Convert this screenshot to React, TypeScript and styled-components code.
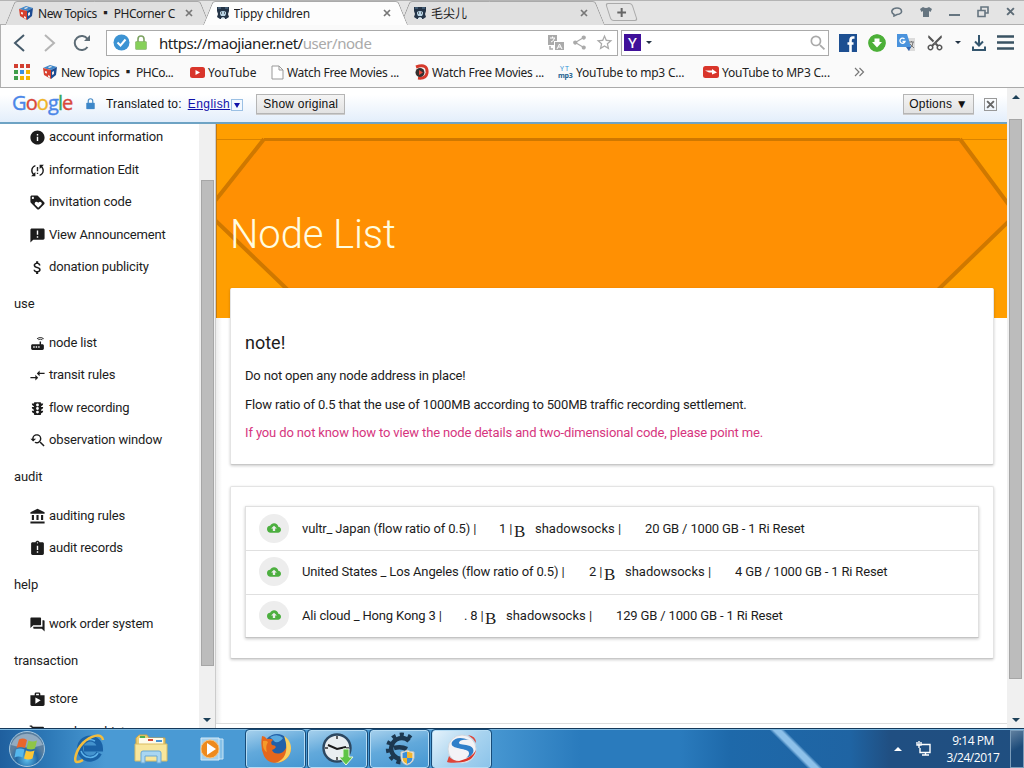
import React from 'react';
import styled, { createGlobalStyle, css } from 'styled-components';
import {
  MdInfo, MdSyncProblem, MdLoyalty, MdAnnouncement, MdAttachMoney, MdRouter, MdCompareArrows,
  MdTraffic, MdYoutubeSearchedFor, MdAccountBalance, MdAssignmentLate, MdQuestionAnswer, MdShop,
  MdShoppingCart, MdBackup, MdShare, MdStarBorder, MdSearch, MdContentCut,
} from 'react-icons/md';

const GlobalStyle = createGlobalStyle`
  * { box-sizing: border-box; }
  body { margin: 0; overflow: hidden; background: #fff; }
`;

const uiFont = '"Noto Sans", "Noto Sans CJK SC", sans-serif';

const Screen = styled.div`
  width: 1024px;
  height: 768px;
  display: flex;
  flex-direction: column;
  overflow: hidden;
  font-family: Roboto, sans-serif;
  color: #1c1c1c;
`;

/* ---------- browser chrome ---------- */

const TabStrip = styled.div`
  flex: none;
  height: 25px;
  display: flex;
  padding-left: 5px;
  background: #e4e4e4;
  border-top: 1px solid #b4b4b4;
  border-bottom: 1px solid #b0b0b0;
  font-family: ${uiFont};
`;

const Tab = styled.div<{ $active?: boolean }>`
  position: relative;
  z-index: ${p => (p.$active ? 2 : 1)};
  width: 205px;
  height: 24px;
  margin-right: -7.5px;
  padding: 0 17px 0 13px;
  display: flex;
  align-items: center;
  font-size: 12px;
  white-space: nowrap;
  color: #222;
  &::before, &::after {
    content: '';
    position: absolute;
    z-index: -1;
    top: 0;
    bottom: 0;
    width: 51%;
    background: ${p => (p.$active ? '#fdfdfd' : '#e0e0e0')};
    border-top: 1px solid #aaa;
  }
  &::before {
    left: 0;
    border-left: 1px solid #999;
    border-top-left-radius: 3px;
    transform: skewX(-22deg);
    transform-origin: bottom;
  }
  &::after {
    right: 0;
    border-right: 1px solid #999;
    border-top-right-radius: 3px;
    transform: skewX(22deg);
    transform-origin: bottom;
  }
`;

const TabTitle = styled.span<{ $ls?: number }>`
  flex: 1;
  overflow: hidden;
  margin-left: 4px;
  letter-spacing: ${p => p.$ls ?? 0}px;
`;

const NewTab = styled.div`
  width: 27px;
  height: 18px;
  margin: 2px 0 0 10px;
  display: grid;
  place-items: center;
  border: 1px solid #aaa;
  border-radius: 3px;
  background: #e4e4e4;
  transform: skewX(18deg);
  svg { transform: skewX(-18deg); }
`;

const WindowButtons = styled.div`
  margin-left: auto;
  padding-right: 9px;
  display: flex;
  align-items: center;
  gap: 17px;
  height: 21px;
`;

const NavBar = styled.div`
  flex: none;
  height: 35px;
  display: flex;
  align-items: center;
  padding: 0 10px 0 12px;
  background: #fafafa;
  border-left: 1px solid #b0b0b0;
  font-family: ${uiFont};
`;

const NavButtons = styled.div`
  display: flex;
  gap: 17px;
  width: 93px;
  align-items: center;
`;

const Field = styled.div<{ $w: number }>`
  width: ${p => p.$w}px;
  height: 26px;
  display: flex;
  align-items: center;
  background: #fff;
  border: 1px solid #aaa;
`;

const AddressField = styled(Field)`
  padding: 0 3px 0 6px;
  gap: 5px;
  margin-right: 3px;
`;

const SearchField = styled(Field)`
  padding: 0 0 0 2px;
  gap: 5px;
  margin-right: 10px;
  svg { margin-left: auto; }
`;

const FieldActions = styled.span`
  display: flex;
  align-items: center;
  gap: 7px;
  color: #aaa;
`;

const Url = styled.span`
  flex: 1;
  margin-left: 7px;
  font-size: 15px;
  letter-spacing: -0.45px;
  color: #222;
  white-space: nowrap;
  span { color: #aaa; }
`;

const Caret = styled.i`
  border: 3px solid transparent;
  border-top-color: #234;
  border-bottom: 0;
`;

const YahooBadge = styled.b`
  width: 17px;
  height: 17px;
  background: #40109a;
  color: #fff;
  font: 500 15px/17px "Noto Sans", sans-serif;
  text-align: center;
`;

const Extensions = styled.div`
  display: flex;
  flex: 1;
  align-items: center;
  justify-content: space-between;
`;

const Scissors = styled(MdContentCut)`
  transform: rotate(-90deg);
`;

const Bookmarks = styled.div`
  flex: none;
  height: 28px;
  display: flex;
  padding: 0 0 3px 13px;
  align-items: center;
  background: #fafafa;
  border-left: 1px solid #b0b0b0;
  border-bottom: 1px solid #aaa;
  font-family: ${uiFont};
  font-size: 12px;
  color: #222;
`;

const Bookmark = styled.div<{ $w: number; $ls?: number }>`
  width: ${p => p.$w}px;
  display: flex;
  align-items: center;
  gap: 3px;
  white-space: nowrap;
  letter-spacing: ${p => p.$ls ?? 0}px;
`;

const Mp3Mark = styled.span`
  width: 15px;
  display: flex;
  flex-direction: column;
  font: 700 7px/7px "Noto Sans", sans-serif;
  letter-spacing: -0.3px;
  color: #24638f;
  span { font-weight: 400; padding-left: 2px; letter-spacing: 1px; color: #3192d6; }
`;

/* ---------- page area ---------- */

const Viewport = styled.div`
  flex: none;
  height: 640px;
  display: flex;
  background: #fff;
`;

const PageColumn = styled.div`
  width: 1007px;
  display: flex;
  flex-direction: column;
`;

const TranslateBar = styled.div`
  flex: none;
  height: 36px;
  display: flex;
  align-items: center;
  padding: 0 10px 2px 12px;
  background: linear-gradient(#fff 20%, #e3eefb);
  border-bottom: 2px solid #6ea3c4;
  font: 12px "Liberation Sans", Arial, sans-serif;
  color: #111;
  white-space: nowrap;
`;

const GoogleWord = styled.span`
  width: 74px;
  font: 500 20px/20px "Open Sans", sans-serif;
  letter-spacing: -0.9px;
  margin-top: -3px;
  -webkit-text-stroke: 0.4px;
`;

const Letter = styled.span<{ $c: string }>`
  color: ${p => p.$c};
`;

const Translated = styled.span`
  margin: 0 6px 0 11px;
  letter-spacing: 0.2px;
`;

const Language = styled.span`
  color: #11a;
  letter-spacing: 0.45px;
  text-decoration: underline;
`;

const LanguageArrow = styled.span`
  width: 12px;
  height: 12px;
  margin: 2px 13px 0 1px;
  display: grid;
  place-items: center;
  border: 1px solid #9bc0e4;
  background: #f2f8ff;
  i { border: 3px solid transparent; border-top: 5px solid #11a; border-bottom: 0; }
`;

const GreyButton = styled.span<{ $w: number; $end?: boolean }>`
  width: ${p => p.$w}px;
  height: 20px;
  margin-left: ${p => (p.$end ? 'auto' : '0')};
  border: 1px solid #b5b5b5;
  background: linear-gradient(#f4f4f4, #e2e2e2);
  box-shadow: 0 1px 0 #ccc;
  line-height: 18px;
  text-align: center;
  letter-spacing: 0.22px;
`;

const CloseBox = styled.span`
  width: 13px;
  height: 13px;
  margin: 0 0 0 10px;
  border: 1px solid #999;
  display: grid;
  place-items: center;
`;

const Columns = styled.div`
  flex: 1;
  min-height: 0;
  display: flex;
`;

const Sidebar = styled.nav`
  width: 199px;
  overflow: hidden;
`;

const Heading = styled.div`
  height: 43px;
  padding: 0 0 9px 14px;
  display: flex;
  align-items: center;
  font-size: 13px;
  letter-spacing: -0.1px;
`;

const NavItem = styled.div`
  height: 32.5px;
  padding: 0 0 7px 29px;
  display: flex;
  align-items: center;
  gap: 3px;
  font-size: 13px;
  letter-spacing: -0.16px;
  white-space: nowrap;
  svg { width: 17px; height: 17px; margin-top: 2px; flex: none; }
`;

const scrollBase = css`
  display: flex;
  flex-direction: column;
  align-items: center;
  background: #f0f0f0;
`;

const SideScroll = styled.div`
  ${scrollBase}
  width: 17px;
  padding: 56px 0 6px;
  border-right: 1px solid #ccc;
`;

const PageScroll = styled.div`
  ${scrollBase}
  width: 17px;
  padding: 7px 0 6px;
`;

const Thumb = styled.div<{ $h: number; $mt?: number }>`
  width: 13px;
  height: ${p => p.$h}px;
  margin-top: ${p => p.$mt ?? 0}px;
  background: #bcbcbc;
  border: 1px solid #a6a6a6;
`;

const Arrow = styled.i<{ $down?: boolean }>`
  border: 4px solid transparent;
  ${p => (p.$down
    ? 'border-top-color: #1d4058; border-bottom: 0; margin-top: auto;'
    : 'border-bottom-color: #1d4058; border-top: 0;')}
`;

const Main = styled.main`
  flex: 1;
  min-width: 0;
  display: flex;
  flex-direction: column;
  border-bottom: 1px solid #ddd;
  margin-bottom: 4px;
  background: linear-gradient(90deg, #ececec, #fff 6px);
`;

const Hero = styled.header`
  flex: none;
  height: 194px;
  position: relative;
  background: #ff9e00;
  border-left: 1px solid #c47a10;
`;

const HeroArt = styled.svg`
  position: absolute;
  inset: 0;
  width: 790px;
  height: 194px;
`;

const Title = styled.h1`
  position: relative;
  margin: 0;
  padding: 87px 0 0 13px;
  font: 300 40px/47px Roboto, sans-serif;
  letter-spacing: -0.1px;
  color: #fffde0;
`;

const Card = styled.section<{ $h: number }>`
  position: relative;
  flex: none;
  height: ${p => p.$h}px;
  margin: 0 13px 21px 14px;
  background: #fff;
  border-radius: 2px;
  border: 1px solid #e4e4e4;
  border-bottom-color: #c8c8c8;
  box-shadow: 0 1px 3px rgba(0, 0, 0, 0.2);
`;

const NoteCard = styled(Card)`
  margin-top: -30px;
  border-top-color: #fff;
  padding: 42px 14px 0;
`;

const NoteTitle = styled.h2`
  margin: 0 0 11px;
  font: 400 18px/24px Roboto, sans-serif;
`;

const Note = styled.p<{ $accent?: boolean }>`
  margin: 0 0 8.5px;
  font-size: 13px;
  line-height: 20px;
  letter-spacing: ${p => (p.$accent ? -0.13 : -0.16)}px;
  color: ${p => (p.$accent ? '#d6357e' : '#1c1c1c')};
`;

const ListCard = styled(Card)`
  padding: 19px 14px;
`;

const NodeTable = styled.div`
  border: 1px solid #e0e0e0;
  border-bottom-color: #c4c4c4;
  box-shadow: 0 1px 3px rgba(0, 0, 0, 0.22);
`;

const NodeRow = styled.div`
  height: 43.3px;
  display: flex;
  align-items: center;
  padding: 0 0 1px 13px;
  font-size: 13px;
  letter-spacing: -0.15px;
  white-space: nowrap;
  & + & { border-top: 1px solid #e0e0e0; }
`;

const Avatar = styled.span`
  width: 30px;
  height: 29px;
  border-radius: 50%;
  margin-right: 13px;
  display: grid;
  place-items: center;
  background: #ededed;
  color: #4caf3f;
`;

const Cell = styled.span<{ $w: number }>`
  width: ${p => p.$w}px;
`;

const Service = styled(Cell)`
  letter-spacing: 0;
`;

const Bitcoin = styled.span`
  width: 21px;
  font: 17px/17px "Liberation Serif", serif;
  padding-top: 6px;
`;

/* ---------- taskbar ---------- */

const Taskbar = styled.footer`
  flex: none;
  height: 40px;
  display: flex;
  align-items: center;
  background:
    linear-gradient(45deg, transparent 48.2%, #8dc1ea 49.2%, #8dc1ea 50.8%, transparent 51.8%) 596px 0 / 400px 40px no-repeat,
    linear-gradient(90deg, #1f5f9e 0, #2e7ab8 50px, #4a9ad4 105px, #4a9ad4 480px, #2a7bbd 580px, #2a7bbd 680px, #1e69aa 730px, #1f64a3 850px, #204f82 890px, #204f80);
  border-top: 1px solid #15395a;
  box-shadow: inset 0 1px 0 #7db8e0;
  color: #fff;
`;

const Launcher = styled.div<{ $w: number }>`
  width: ${p => p.$w}px;
  display: grid;
  place-items: center;
`;

const TaskButton = styled.div<{ $active?: boolean }>`
  width: 59px;
  height: 38px;
  margin-right: 3px;
  display: grid;
  place-items: center;
  border: 1px solid #b5dcf4;
  outline: 1px solid #174b78;
  border-radius: 3px;
  background: ${p => (p.$active
    ? 'linear-gradient(135deg, #e4f2fb, #a8d3ef 55%, #8cc4ea)'
    : 'linear-gradient(165deg, #a4cfec, #62a9db 45%, #4597d2)')};
`;

const Tray = styled.div`
  margin-left: auto;
  display: flex;
  align-items: center;
  height: 100%;
`;

const TrayUp = styled.i`
  border: 4px solid transparent;
  border-bottom-color: #fff;
  border-top: 0;
  margin-right: 14px;
`;

const Clock = styled.div`
  width: 62px;
  margin: 0 6px 0 11px;
  font: 12px/17px "Open Sans", sans-serif;
  letter-spacing: -0.45px;
  text-align: center;
`;

const ShowDesktop = styled.div`
  width: 14px;
  height: 38px;
  border: 1px solid #7a9cba;
  background: linear-gradient(150deg, #60809f, #1d4b7a 50%);
`;

/* ---------- drawings ---------- */

const Cross = ({ s = 8, c = '#777' }: { s?: number; c?: string }) => (
  <svg width={s} height={s} viewBox="0 0 8 8"><path d="M1 1l6 6M7 1l-6 6" stroke={c} strokeWidth="1.7" /></svg>
);

const CubeIcon = () => (
  <svg width="16" height="16" viewBox="0 0 16 16">
    <path d="M1 4l7-3 7 2-6 3z" fill="#3e86c9" />
    <path d="M1 4l8 2v9l-7-4z" fill="#d8402f" />
    <path d="M9 6l6-3-1 8-5 4z" fill="#1d4c93" />
    <path d="M3 7l2 .5v2L3 9zM10 8l2-1v3l-2 1zM6 3l3-1 1 1-3 1zM6 11l2 1v2l-2-1z" fill="#f4e9e6" />
  </svg>
);

const FaceIcon = () => (
  <svg width="14" height="14" viewBox="0 0 14 14">
    <path d="M1 1h12v4l-1 3 1 3-3 2H4l-3-2 1-3-1-3z" fill="#243447" />
    <path d="M4 6q3-2 6 0v2L9 10H5L4 8z" fill="#b9d3e4" />
    <path d="M5 6.500h1v1H5zM8 6.500h1v1H8z" fill="#111" />
    <path d="M5 12l2-1 2 1v1H5z" fill="#dce8ef" />
    <path d="M2 2h3M9 2h3" stroke="#5c7f9c" />
  </svg>
);

const PageIcon = () => (
  <svg width="13" height="15" viewBox="0 0 13 15"><path d="M1 1h7l4 4v9H1zM8 1v4h4" fill="#fff" stroke="#999" /></svg>
);

const AppsIcon = () => (
  <svg width="17" height="17" viewBox="0 0 17 17">
    {['#d23f31', '#d23f31', '#d23f31', '#3f9e4a', '#3b8fe0', '#f4b400', '#3f9e4a', '#f4b400', '#f4b400'].map((c, i) => (
      <rect key={i} x={(i % 3) * 6} y={Math.floor(i / 3) * 6} width="4" height="4" fill={c} />
    ))}
  </svg>
);

const LockIcon = ({ w, c, s }: { w: number; c: string; s: string }) => (
  <svg width={w} height={w * 1.25} viewBox="0 0 12 15">
    <path d="M3 7V4a3 3 0 0 1 6 0v3" fill="none" stroke={s} strokeWidth="1.6" />
    <rect x="0.5" y="6.5" width="11" height="8" rx="0.8" fill={c} stroke={s} strokeWidth="0.5" />
  </svg>
);

const OrbIcon = () => (
  <svg width="38" height="38" viewBox="0 0 38 38">
    <defs><radialGradient id="orb" cx=".5" cy=".8"><stop offset="0" stopColor="#5fc0ee" /><stop offset=".6" stopColor="#2368a4" /><stop offset="1" stopColor="#5b7f9f" /></radialGradient></defs>
    <circle cx="19" cy="19" r="17.5" fill="url(#orb)" stroke="#a5c8e0" />
    <path d="M3 15a17 17 0 0 1 32 0q-16 5-32 0z" fill="#d4e2ec" opacity=".45" />
    <path d="M11 9.500q4-2 8 .5l-2 8q-4-2-8.500 0z" fill="#e8662c" />
    <path d="M20.500 10.500q4 2 8.500 0l-2 8q-4 2-8.500 0z" fill="#8fc548" />
    <path d="M8 19.500q4-2 8.500 0l-2 8q-4-2-8 0z" fill="#55b7ee" />
    <path d="M18 20.500q4 2 8.500 0l-2 8q-4 2-8.500 0z" fill="#fcc635" />
  </svg>
);

const IeIcon = () => (
  <svg width="34" height="32" viewBox="0 0 34 32">
    <path d="M27 20a10 10 0 1 1 1-4.500H12" fill="none" stroke="#1a62a6" strokeWidth="6" />
    <path d="M26 20a9.500 9.500 0 0 1-17-2M10 10q6-6 13-2" fill="none" stroke="#5db2ea" strokeWidth="1.500" />
    <path d="M31 7c-1-8-13-4-20 3S1 29 5 29q3 0 6-2" fill="none" stroke="#f2bd3e" strokeWidth="2.500" />
  </svg>
);

const FolderIcon = () => (
  <svg width="34" height="30" viewBox="0 0 34 30">
    <path d="M2 4l3-3h8l2 3h16v22H2z" fill="#ecd077" stroke="#c9a349" />
    <path d="M5 4h24v6H5z" fill="#fdfbea" />
    <path d="M6 2h5v2H6z" fill="#4caf50" /><path d="M14 5h5v2h-5z" fill="#d84a36" /><path d="M22 6h6v2h-6z" fill="#4b94d4" />
    <path d="M1 10h32v17H1z" fill="#f8e69c" stroke="#d9bc62" />
    <path d="M7 29V19q0-2 2-2h16q2 0 2 2v10h-4v-7H11v7z" fill="#a9d6f2" stroke="#6aa7d2" />
  </svg>
);

const PlayerIcon = () => (
  <svg width="26" height="26" viewBox="0 0 26 26">
    <path d="M8 3h16v20H8z" fill="#86c1e8" stroke="#c8e4f5" />
    <path d="M2 2h18v22H2z" fill="#a3d0ee" stroke="#d4eaf7" />
    <circle cx="11" cy="13" r="9" fill="#ee8a1d" stroke="#f8c27d" />
    <path d="M8 7l9 6-9 6z" fill="#fff" />
  </svg>
);

const FirefoxIcon = () => (
  <svg width="32" height="32" viewBox="0 0 32 32">
    <circle cx="17" cy="14" r="13" fill="#2260a8" />
    <path d="M10 4q8-4 13 1-3 5-8 4z" fill="#59a9de" />
    <path d="M2 3q3 0 5 3 4-1 6 1-3 2-1 5 3 0 4 2-2 3-4 3 2 5 9 3c5-2 7-8 4-14 8 5 7 15 1 20-7 6-18 5-22-3Q0 15 2 3z" fill="#e5671d" />
    <path d="M24 3c9 5 9 18 2 23q-5 4-11 4c11-3 14-14 9-27z" fill="#f8d060" />
    <path d="M3 8q3-1 5 1-3 5-1 10-5-2-4-11z" fill="#f49b2a" />
  </svg>
);

const ClockIcon = () => (
  <svg width="34" height="34" viewBox="0 0 34 34">
    <circle cx="16" cy="16" r="13.500" fill="#e9eef1" stroke="#2d4861" strokeWidth="2.400" />
    <path d="M16 4v3M16 25v3M4 16h3M25 16h3" stroke="#333" strokeWidth="1.500" />
    <path d="M7 13l9 4 9-2" fill="none" stroke="#1a1a1a" strokeWidth="2" />
    <path d="M22 17h6v8h4l-7 8-7-8h4z" fill="#5fc447" stroke="#e6f7df" />
  </svg>
);

const GearIcon = () => (
  <svg width="34" height="34" viewBox="0 0 34 34">
    <path d="M26 9A10.500 10.500 0 1 0 20 27M11 16q7-2 13 1" fill="none" stroke="#1d3850" strokeWidth="4.500" />
    <path d="M28 6A14 14 0 1 0 20 30.500" fill="none" stroke="#1d3850" strokeWidth="4" strokeDasharray="4 4" />
    <path d="M18 20q4 0 6-2 3 2 7 2v6q-1 5-7 7-6-2-6-7z" fill="#f2f2ee" stroke="#c4c4bc" />
    <path d="M19.500 21l4.500-1.500V26h-4.500zM24 26h5.500q0 4-5.500 6z" fill="#3b8ed6" />
    <path d="M24 19.500l5.500 1.500v5H24zM19.500 26H24v6q-4.500-2-4.500-6z" fill="#f2b52e" />
  </svg>
);

const SwirlIcon = () => (
  <svg width="34" height="34" viewBox="0 0 34 34">
    <circle cx="17" cy="17" r="14" fill="#f3f3f6" stroke="#cfd8e0" />
    <path d="M24 8Q12 3 7 10c-3 7 12 6 16 9 2 2 1 5-2 7 8-2 10-9 4-12-5-2-11-1-11-3 0-3 5-4 10-3z" fill="#2f7fc9" />
    <path d="M31 18q-3 15-26 12 20-1 26-12z" fill="#d9362c" />
    <path d="M4 24q3 5 11 5-9 3-13 1zM23 3q8 1 8 8-3-5-8-8z" fill="#e04438" />
  </svg>
);

/* ---------- data ---------- */

const menu = [
  { title: '', items: [[MdInfo, 'account information'], [MdSyncProblem, 'information Edit'], [MdLoyalty, 'invitation code'], [MdAnnouncement, 'View Announcement'], [MdAttachMoney, 'donation publicity']] },
  { title: 'use', items: [[MdRouter, 'node list'], [MdCompareArrows, 'transit rules'], [MdTraffic, 'flow recording'], [MdYoutubeSearchedFor, 'observation window']] },
  { title: 'audit', items: [[MdAccountBalance, 'auditing rules'], [MdAssignmentLate, 'audit records']] },
  { title: 'help', items: [[MdQuestionAnswer, 'work order system']] },
  { title: 'transaction', items: [[MdShop, 'store'], [MdShoppingCart, 'purchase history']] },
] as { title: string; items: [React.ComponentType, string][] }[];

const nodes = [
  { name: 'vultr_ Japan (flow ratio of 0.5) |', w1: 197, count: '1 |', w2: 15, usage: '20 GB / 1000 GB - 1 Ri Reset' },
  { name: 'United States _ Los Angeles (flow ratio of 0.5) |', w1: 287, count: '2 |', w2: 15, usage: '4 GB / 1000 GB - 1 Ri Reset' },
  { name: 'Ali cloud _ Hong Kong 3 |', w1: 162, count: '. 8 |', w2: 21, usage: '129 GB / 1000 GB - 1 Ri Reset' },
];

export default function App() {
  return (
    <Screen>
      <GlobalStyle />
      <TabStrip>
        <Tab><CubeIcon /><TabTitle $ls={-0.45}>New Topics ▪ PHCorner C</TabTitle><Cross /></Tab>
        <Tab $active><FaceIcon /><TabTitle $ls={-0.2}>Tippy children</TabTitle><Cross /></Tab>
        <Tab><FaceIcon /><TabTitle>毛尖儿</TabTitle><Cross /></Tab>
        <NewTab><svg width="9" height="9" viewBox="0 0 9 9"><path d="M4.500 0v9M0 4.500h9" stroke="#666" strokeWidth="2" /></svg></NewTab>
        <WindowButtons>
          <svg width="12" height="10" viewBox="0 0 12 10"><path d="M3 7.500C-1 5 1 1 6 1s7 6 0 6.500L3 9z" fill="none" stroke="#667580" strokeWidth="1.600" /></svg>
          <svg width="12" height="10" viewBox="0 0 12 10"><path d="M0 2l3-2q3 2 6 0l3 2-1.500 3L9 4v6H3V4l-1.500 1z" fill="#667580" /></svg>
          <svg width="11" height="10" viewBox="0 0 11 10"><path d="M0 8h11" stroke="#667580" strokeWidth="2" /></svg>
          <svg width="12" height="12" viewBox="0 0 12 12"><path d="M4 4V1h7v6H8M1 4.500h7v6H1z" fill="none" stroke="#667580" strokeWidth="1.600" /></svg>
          <Cross s={9} c="#5c6b76" />
        </WindowButtons>
      </TabStrip>

      <NavBar>
        <NavButtons>
          <svg width="13" height="18" viewBox="0 0 13 18"><path d="M11 1L2 9l9 8" fill="none" stroke="#455a6a" strokeWidth="2" /></svg>
          <svg width="13" height="18" viewBox="0 0 13 18"><path d="M2 1l9 8-9 8" fill="none" stroke="#b5b5b5" strokeWidth="2" /></svg>
          <svg width="18" height="18" viewBox="0 0 18 18"><path d="M14.500 13a7 7 0 1 1 0-8" fill="none" stroke="#5d6c76" strokeWidth="2" /><path d="M17 1v6h-6z" fill="#5d6c76" /></svg>
        </NavButtons>
        <AddressField $w={512}>
          <svg width="17" height="17" viewBox="0 0 17 17"><circle cx="8.500" cy="8.500" r="8" fill="#3c93d3" /><path d="M4.500 8.500l3 3 5-6" fill="none" stroke="#fff" strokeWidth="2" /></svg>
          <LockIcon w={12} c="#86d05a" s="#7da362" />
          <Url>https://maojianer.net/<span>user/node</span></Url>
          <FieldActions>
            <svg width="16" height="16" viewBox="0 0 16 16"><path d="M0 0h9v6H6v4H0zM7 7h9v8H7z" fill="#aaa" /><path d="M2 3h5M4.500 1.500V3M3 7q3-1 3.500-4" stroke="#fff" fill="none" /><path d="M9 14l2.500-5 2.500 5M10 12h3" stroke="#fff" fill="none" /><path d="M2 11v3h3" stroke="#aaa" fill="none" strokeWidth="1.500" /></svg>
            <MdShare size={17} />
            <MdStarBorder size={19} />
          </FieldActions>
        </AddressField>
        <SearchField $w={208}>
          <YahooBadge>Y</YahooBadge>
          <Caret />
          <MdSearch size={20} color="#aaa" />
        </SearchField>
        <Extensions>
          <svg width="18" height="18" viewBox="0 0 18 18"><path d="M0 0h18v18H0z" fill="#1d4f91" /><path d="M15.500 3.500H14q-2.500 0-2.500 3V18M8.500 9.500h6" stroke="#fff" strokeWidth="2.600" fill="none" /></svg>
          <svg width="18" height="18" viewBox="0 0 18 18"><circle cx="9" cy="9" r="7" fill="#fff" stroke="#4cb038" strokeWidth="3.500" /><path d="M6 5.500q3-1.500 6 0l1.500 2.500L9 13.500 4.500 8z" fill="#fff" /><circle cx="9" cy="9" r="8.500" fill="#4cb038" /><path d="M6.500 4.500h5v3.500H14l-5 5.500L4 8h2.500z" fill="#fff" /></svg>
          <svg width="19" height="18" viewBox="0 0 19 18"><path d="M8 4h10v13H11z" fill="#dcdcdc" /><path d="M0 0h10l4 13H0z" fill="#4a93dd" /><path d="M7.500 5A2.600 2.600 0 1 0 8 7.500H5.500" stroke="#fff" fill="none" strokeWidth="1.300" /><path d="M12 8h5M14.500 7v1M13 14q3-2 3-6M13 10l4 4" stroke="#777" fill="none" /><path d="M9 13h5l-2 4z" fill="#2f66b5" /></svg>
          <Scissors size={18} color="#555" />
          <Caret />
          <svg width="14" height="16" viewBox="0 0 14 16"><path d="M7 0v10M3 6.500l4 4 4-4M1 11.500V15h12v-3.500" fill="none" stroke="#34566e" strokeWidth="2" /></svg>
          <svg width="17" height="15" viewBox="0 0 17 15"><path d="M0 1.500h17M0 7.500h17M0 13.500h17" stroke="#3a5363" strokeWidth="2.500" /></svg>
        </Extensions>
      </NavBar>

      <Bookmarks>
        <Bookmark $w={28}><AppsIcon /></Bookmark>
        <Bookmark $w={148} $ls={-0.5}><CubeIcon />New Topics ▪ PHCo...</Bookmark>
        <Bookmark $w={81}><svg width="15" height="11" viewBox="0 0 15 11"><rect width="15" height="11" rx="2.500" fill="#d9352b" /><path d="M5.500 3l4.500 2.500L5.500 8z" fill="#fff" /></svg>YouTube</Bookmark>
        <Bookmark $w={143} $ls={-0.3}><PageIcon />Watch Free Movies ...</Bookmark>
        <Bookmark $w={144} $ls={-0.3}><svg width="15" height="16" viewBox="0 0 15 16"><path d="M2 3Q14-1 13 9q-1 6-9 5" fill="none" stroke="#d63a2c" strokeWidth="3" /><circle cx="6" cy="8.500" r="4.500" fill="#36302f" /><path d="M5 6l4 2.500L5 11z" fill="#e8483a" /></svg>Watch Free Movies ...</Bookmark>
        <Bookmark $w={145} $ls={-0.2}><Mp3Mark><span>YT</span>mp3</Mp3Mark>YouTube to mp3 C...</Bookmark>
        <Bookmark $w={151} $ls={-0.2}><svg width="16" height="12" viewBox="0 0 16 12"><rect width="16" height="12" rx="2.500" fill="#d9352b" /><path d="M2 4.500h7v-1.500l5 3.500-5 2V6.500H6z" fill="#fff" /></svg>YouTube to MP3 C...</Bookmark>
        <svg width="11" height="10" viewBox="0 0 11 10"><path d="M1 1l4 4-4 4M5.500 1l4 4-4 4" fill="none" stroke="#777" strokeWidth="1.200" /></svg>
      </Bookmarks>

      <Viewport>
        <PageColumn>
          <TranslateBar>
            <GoogleWord>
              <Letter $c="#4a86e8">G</Letter><Letter $c="#d9473a">o</Letter><Letter $c="#f0b429">o</Letter><Letter $c="#4a86e8">g</Letter><Letter $c="#3aa757">l</Letter><Letter $c="#d9473a">e</Letter>
            </GoogleWord>
            <LockIcon w={9} c="#3d87c9" s="#4d8fc8" />
            <Translated>Translated to:</Translated>
            <Language>English</Language>
            <LanguageArrow><i /></LanguageArrow>
            <GreyButton $w={89}>Show original</GreyButton>
            <GreyButton $w={71} $end>Options ▼</GreyButton>
            <CloseBox><Cross s={9} c="#666" /></CloseBox>
          </TranslateBar>
          <Columns>
            <Sidebar>
              {menu.map(group => (
                <React.Fragment key={group.title}>
                  {group.title && <Heading>{group.title}</Heading>}
                  {group.items.map(([Icon, label]) => <NavItem key={label}><Icon />{label}</NavItem>)}
                </React.Fragment>
              ))}
            </Sidebar>
            <SideScroll><Thumb $h={486} /><Arrow $down /></SideScroll>
            <Main>
              <Hero>
                <HeroArt viewBox="0 0 790 194">
                  <path d="M0 78L47 15H743L790 80V98L690 196H102L0 98z" fill="#ff9003" />
                  <path d="M0 15.500H790" stroke="#d98300" />
                  <path d="M47 15.500H743" stroke="#cf7800" strokeWidth="3" />
                  <path d="M-2 77L47 15M743 15L792 81M-2 96L98 192M792 97L692 194" stroke="#cf7800" strokeWidth="4" fill="none" />
                </HeroArt>
                <Title>Node List</Title>
              </Hero>
              <NoteCard $h={177}>
                <NoteTitle>note!</NoteTitle>
                <Note>Do not open any node address in place!</Note>
                <Note>Flow ratio of 0.5 that the use of 1000MB according to 500MB traffic recording settlement.</Note>
                <Note $accent>If you do not know how to view the node details and two-dimensional code, please point me.</Note>
              </NoteCard>
              <ListCard $h={173}>
                <NodeTable>
                  {nodes.map(n => (
                    <NodeRow key={n.name}>
                      <Avatar><MdBackup size={14} /></Avatar>
                      <Cell $w={n.w1}>{n.name}</Cell>
                      <Cell $w={n.w2}>{n.count}</Cell>
                      <Bitcoin>B</Bitcoin>
                      <Service $w={110}>shadowsocks |</Service>
                      <span>{n.usage}</span>
                    </NodeRow>
                  ))}
                </NodeTable>
              </ListCard>
            </Main>
          </Columns>
        </PageColumn>
        <PageScroll><Arrow /><Thumb $h={560} $mt={20} /><Arrow $down /></PageScroll>
      </Viewport>

      <Taskbar>
        <Launcher $w={54}><OrbIcon /></Launcher>
        <Launcher $w={70}><IeIcon /></Launcher>
        <Launcher $w={54}><FolderIcon /></Launcher>
        <Launcher $w={68}><PlayerIcon /></Launcher>
        <TaskButton><FirefoxIcon /></TaskButton>
        <TaskButton><ClockIcon /></TaskButton>
        <TaskButton><GearIcon /></TaskButton>
        <TaskButton $active><SwirlIcon /></TaskButton>
        <Tray>
          <TrayUp />
          <svg width="15" height="15" viewBox="0 0 15 15"><path d="M5 3.500h9v8H4V7M6 14h7M9.500 11v3M1 1v3h4V1M3 0v7" fill="none" stroke="#fff" strokeWidth="1.400" /></svg>
          <Clock>9:14 PM<br />3/24/2017</Clock>
          <ShowDesktop />
        </Tray>
      </Taskbar>
    </Screen>
  );
}
